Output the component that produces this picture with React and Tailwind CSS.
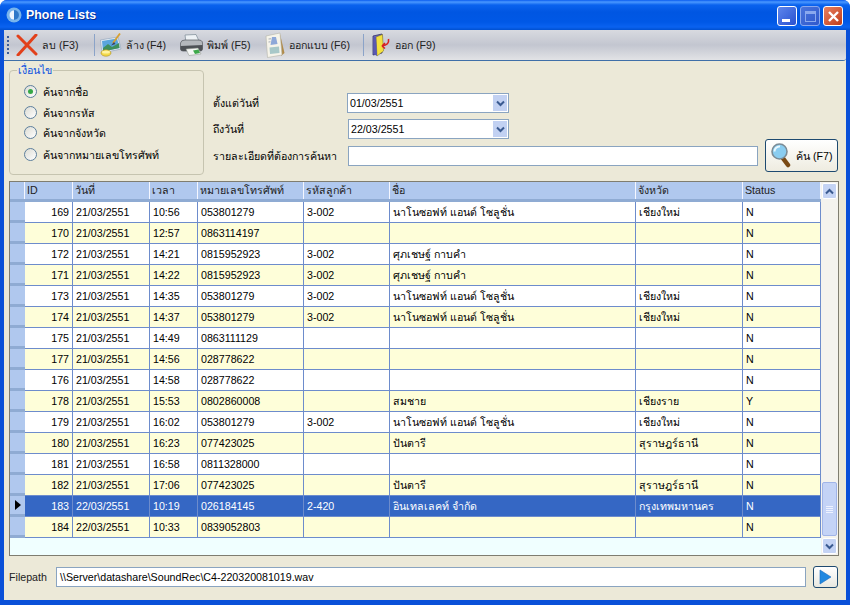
const rows = [
  ["169","21/03/2551","10:56","053801279","3-002","นาโนซอฟท์ แอนด์ โซลูชั่น","เชียงใหม่","N"],
  ["170","21/03/2551","12:57","0863114197","","","","N"],
  ["172","21/03/2551","14:21","0815952923","3-002","ศุภเชษฐ์ กาบคำ","","N"],
  ["171","21/03/2551","14:22","0815952923","3-002","ศุภเชษฐ์ กาบคำ","","N"],
  ["173","21/03/2551","14:35","053801279","3-002","นาโนซอฟท์ แอนด์ โซลูชั่น","เชียงใหม่","N"],
  ["174","21/03/2551","14:37","053801279","3-002","นาโนซอฟท์ แอนด์ โซลูชั่น","เชียงใหม่","N"],
  ["175","21/03/2551","14:49","0863111129","","","","N"],
  ["177","21/03/2551","14:56","028778622","","","","N"],
  ["176","21/03/2551","14:58","028778622","","","","N"],
  ["178","21/03/2551","15:53","0802860008","","สมชาย","เชียงราย","Y"],
  ["179","21/03/2551","16:02","053801279","3-002","นาโนซอฟท์ แอนด์ โซลูชั่น","เชียงใหม่","N"],
  ["180","21/03/2551","16:23","077423025","","ปันตารี","สุราษฎร์ธานี","N"],
  ["181","21/03/2551","16:58","0811328000","","","","N"],
  ["182","21/03/2551","17:06","077423025","","ปันตารี","สุราษฎร์ธานี","N"],
  ["183","22/03/2551","10:19","026184145","2-420","อินเทลเลคท์ จำกัด","กรุงเทพมหานคร","N"],
  ["184","22/03/2551","10:33","0839052803","","","","N"],
];
const headers = ["ID","วันที่","เวลา","หมายเลขโทรศัพท์","รหัสลูกค้า","ชื่อ","จังหวัด","Status"];
const cols = "grid grid-cols-[15px_48px_77px_48px_106px_86px_246px_107px_78px]";

const XIcon = () => (
  <svg width="22" height="22" viewBox="0 0 22 22" className="shrink-0"><path d="M2 2 L20 20 M20 1 L2 21" stroke="#e2401a" strokeWidth="3" strokeLinecap="round" fill="none"/></svg>
);
const PaintIcon = () => (
  <svg width="22" height="24" viewBox="0 0 22 24" className="shrink-0">
    <path d="M0.5 7 L18 4 L21 16 L2 20 Z" fill="#e8eef4" stroke="#8aa0b8" strokeWidth="0.6"/>
    <path d="M2 8 L17 5.5 L19.5 15 L3 18.5 Z" fill="#5aa5dc"/>
    <path d="M3 15 L8 11 L12 14 L19 10 L19.5 15 L3 18.5 Z" fill="#3f8f5c"/>
    <path d="M13 10 L20 0.5" stroke="#d8a030" strokeWidth="1.8"/>
    <path d="M11 12.5 L14 9 L15.5 11 Z" fill="#404060"/>
    <ellipse cx="6" cy="20" rx="5" ry="3.2" fill="#f3d94a" stroke="#b09020" strokeWidth="0.6"/>
    <ellipse cx="6" cy="19" rx="4" ry="1.6" fill="#fff3a0"/>
  </svg>
);
const PrinterIcon = () => (
  <svg width="23" height="22" viewBox="0 0 23 22" className="shrink-0">
    <path d="M5 1 L16 0.5 L19 7 L6 8 Z" fill="#eef2f5" stroke="#7a8894" strokeWidth="0.7"/>
    <path d="M0.5 9 Q1 6 5 6 L18 6 Q22.5 6 22.5 9 L22.5 15 Q22.5 17 20 17 L3 17 Q0.5 17 0.5 15 Z" fill="#b4b8bc" stroke="#55595e" strokeWidth="0.7"/>
    <path d="M0.5 12 L22.5 11 L22.5 15 Q22.5 17 20 17 L3 17 Q0.5 17 0.5 15 Z" fill="#4e5256"/>
    <path d="M6 15 L18 14 L21 20 L9 21.5 Z" fill="#f4f6f4" stroke="#8a9088" strokeWidth="0.5"/>
    <path d="M13 16.5 L18.5 15.5 L20 19 L15 20 Z" fill="#3da84a"/>
  </svg>
);
const FormIcon = () => (
  <svg width="20" height="26" viewBox="0 0 20 26" className="shrink-0">
    <path d="M15 2 L19.5 21 L16 24 Z" fill="#b08a48"/>
    <path d="M1 4 L15 1 L17 23 L2.5 25.5 Z" fill="#f6f4ea" stroke="#b4b4a8" strokeWidth="0.6"/>
    <path d="M7 5 L11 5 L12.5 12 L5.5 13 Z" fill="#8ea8d8"/>
    <path d="M4.5 15.5 L14 14.5 L14.5 21 L5 22 Z" fill="#a8c8c8"/>
    <path d="M3.5 7 L6 6.8 M3.5 10 L5.5 9.8" stroke="#9098a8" strokeWidth="0.8"/>
  </svg>
);
const DoorIcon = () => (
  <svg width="18" height="24" viewBox="0 0 18 24" className="shrink-0">
    <path d="M1 3 L10 1 L10 20 L1 22 Z" fill="#6a68c0" stroke="#34346a" strokeWidth="0.8"/>
    <path d="M4 4 L10.5 1.5 L11.5 18 L5 23 Z" fill="#f4e040" stroke="#7a7020" strokeWidth="0.5"/>
    <path d="M1.5 4 L4 4 L5 23 L1.5 21 Z" fill="#5a58b0"/>
    <path d="M16.5 6 Q17.5 12 10 13 M10 13 L13 10 M10 13 L13 15.5" stroke="#d82020" strokeWidth="1.6" fill="none"/>
  </svg>
);
const Loupe = () => (
  <svg width="20" height="25" viewBox="0 0 20 25" className="shrink-0">
    <path d="M11 14 L17 22" stroke="#7a4a14" strokeWidth="4.5" strokeLinecap="round"/>
    <circle cx="8.5" cy="8.5" r="7.5" fill="#8acdf0" stroke="#7c8c96" strokeWidth="1.6"/>
    <path d="M3.5 8.5 A5 5 0 0 1 9 3.5" stroke="#e8f8ff" strokeWidth="2" fill="none"/>
  </svg>
);
const Chevron = ({ up, color = "#3a5a90" }) => (
  <svg width="9" height="7" viewBox="0 0 9 7">
    <path d={up ? "M1 5.5 L4.5 2 L8 5.5" : "M1 1.5 L4.5 5 L8 1.5"} stroke={color} strokeWidth="2" fill="none"/>
  </svg>
);
const ToolBtn = ({ icon, label, cls }) => (
  <div className={`flex items-center ${cls}`}>
    {icon}
    <span className="text-[#222] whitespace-nowrap">{label}</span>
  </div>
);
const Sep = ({ cls }) => <div className={`w-px h-[22px] bg-[#8ba3c8] ${cls}`} />;
const Radio = ({ checked, label, cls }) => (
  <div className={`flex items-center gap-[6px] h-[13px] ml-[14px] ${cls}`}>
    <div className="w-[13px] h-[13px] rounded-full border border-[#5d7f9d] bg-gradient-to-br from-[#dcdcd4] to-white flex items-center justify-center">
      {checked && <div className="w-[5px] h-[5px] rounded-full bg-[#36a846]" />}
    </div>
    <span className="whitespace-nowrap">{label}</span>
  </div>
);
const DateBox = ({ value, cls }) => (
  <div className={`h-[20px] border border-[#8aa4c0] bg-white flex items-center justify-between pl-[2px] pr-[1px] ${cls}`}>
    <span>{value}</span>
    <div className="w-[14px] h-[16px] bg-[#c2d1f2] flex items-center justify-center"><Chevron /></div>
  </div>
);

export default function App() {
  return (
    <div className="w-[850px] h-[605px] overflow-hidden flex flex-col bg-[#0a50d8] rounded-t-[7px] font-['Liberation_Sans','Noto_Sans',sans-serif] text-[10.67px] text-black">
      {/* title bar */}
      <div className="h-[30px] shrink-0 flex items-center pl-[6px] pr-[7px] [background-image:linear-gradient(180deg,#0a5cf0_0px,#4a98ff_2px,#0a62ee_5px,#0056e2_12px,#0058e6_22px,#0a62f0_27px,#0050d0_30px)]">
        <svg width="16" height="16" viewBox="0 0 16 16">
          <circle cx="8" cy="8" r="7.5" fill="#78b4ec"/>
          <circle cx="8" cy="8" r="4.5" fill="#eef6ff"/>
          <path d="M8 3 A5 5 0 0 1 8 13 Z" fill="#2f78c8"/>
        </svg>
        <span className="ml-[4px] text-white font-bold text-[12.4px] [text-shadow:1px_1px_0_#0a3090]">Phone Lists</span>
        <div className="ml-auto mt-[2px] flex gap-[3px]">
          <div className="w-[20px] h-[20px] rounded-[3px] border border-white bg-gradient-to-br from-[#5f86ec] to-[#2a50d0] flex items-end pl-[4px] pb-[3px]">
            <div className="w-[8px] h-[3px] bg-white" />
          </div>
          <div className="w-[20px] h-[20px] rounded-[3px] border border-[#8aa8ee] bg-gradient-to-br from-[#4a74dc] to-[#2f58cc] flex items-center justify-center">
            <div className="w-[11px] h-[11px] border border-[#8aa8ee] border-t-[3px]" />
          </div>
          <div className="w-[20px] h-[20px] rounded-[3px] border border-white bg-gradient-to-br from-[#e88060] to-[#c03a14] flex items-center justify-center">
            <svg width="13" height="13" viewBox="0 0 13 13"><path d="M2 2 L11 11 M11 2 L2 11" stroke="#fff" strokeWidth="2.4"/></svg>
          </div>
        </div>
      </div>

      {/* client area */}
      <div className="flex-1 mx-[4px] mb-[5px] bg-[#ece9d8] flex flex-col min-h-0">
        {/* toolbar */}
        <div className="h-[31px] shrink-0 flex items-center rounded-br-[3px] border-b border-[#3f6fa8] bg-gradient-to-b from-[#d8dae0] via-[#c3c6d0] to-[#e2e3e6]">
          <div className="ml-[3px] w-[2px] h-[18px] border-l-2 border-dotted border-[#3a5a98]" />
          <ToolBtn cls="ml-[7px] gap-[4px]" icon={<XIcon />} label="ลบ (F3)" />
          <Sep cls="ml-[15px]" />
          <ToolBtn cls="ml-[5px] gap-[4px]" icon={<PaintIcon />} label="ล้าง (F4)" />
          <ToolBtn cls="ml-[14px] gap-[4px]" icon={<PrinterIcon />} label="พิมพ์ (F5)" />
          <ToolBtn cls="ml-[14px] gap-[4px]" icon={<FormIcon />} label="ออกแบบ (F6)" />
          <Sep cls="ml-[13px]" />
          <ToolBtn cls="ml-[8px] gap-[5px]" icon={<DoorIcon />} label="ออก (F9)" />
        </div>

        {/* filter section */}
        <div className="h-[120px] shrink-0 flex items-start pl-[5px] pr-[1px]">
          <fieldset className="w-[195px] h-[111px] mt-[3px] border border-[#c6c4b0] rounded-[4px] shrink-0">
            <legend className="ml-[7px] px-[1px] text-[#0a50e0] leading-[12px]">เงื่อนไข</legend>
            <Radio checked label="ค้นจากชื่อ" cls="mt-[9px]" />
            <Radio label="ค้นจากรหัส" cls="mt-[8px]" />
            <Radio label="ค้นจากจังหวัด" cls="mt-[7px]" />
            <Radio label="ค้นจากหมายเลขโทรศัพท์" cls="mt-[9px]" />
          </fieldset>
          <div className="ml-[9px] w-[545px] pt-[32px] flex flex-col">
            <div className="flex items-center h-[20px]">
              <span className="w-[134px]">ตั้งแต่วันที่</span>
              <DateBox value="01/03/2551" cls="w-[162px]" />
            </div>
            <div className="flex items-center h-[20px] mt-[6px]">
              <span className="w-[135px]">ถึงวันที่</span>
              <DateBox value="22/03/2551" cls="w-[161px]" />
            </div>
            <div className="flex items-center h-[20px] mt-[7px]">
              <span className="w-[135px]">รายละเอียดที่ต้องการค้นหา</span>
              <div className="w-[410px] h-[20px] border border-[#8aa4c0] bg-white" />
            </div>
          </div>
          <div className="ml-[7px] mt-[78px] w-[73px] h-[33px] rounded-[3px] border border-[#1e4a70] bg-gradient-to-b from-white to-[#eeece0] flex items-center pl-[5px] gap-[5px]">
            <Loupe />
            <span className="whitespace-nowrap">ค้น (F7)</span>
          </div>
        </div>

        {/* data grid */}
        <div className="ml-[5px] mr-[7px] h-[375px] shrink-0 border border-[#7f7d70] flex bg-[#f0ffff] min-h-0">
          <div className="w-[811px] flex flex-col">
            <div className={`${cols} h-[20px] shrink-0 bg-[#b0c8ee] border-b-[3px] border-[#8fabd3] text-[#222]`}>
              <div className="border-r border-[#f4f6ff]" />
              {headers.map((h) => (
                <div key={h} className="pl-[2px] border-r border-[#f4f6ff] leading-[17px] whitespace-nowrap overflow-hidden">{h}</div>
              ))}
            </div>
            {rows.map((r) => {
              const sel = r[0] === "183";
              const even = ["170","171","174","177","178","180","182","184"].includes(r[0]);
              const bg = sel ? "bg-[#3567c4] text-white" : even ? "bg-[#fefed9]" : "bg-white";
              return (
                <div key={r[0]} className={`${cols} h-[21px] shrink-0 ${bg}`}>
                  <div className="bg-[#b0c8ee] border-b-[3px] border-[#8fabd3] flex items-center justify-center text-black">
                    {sel && <svg width="6" height="10" viewBox="0 0 6 10"><path d="M0 0 L6 5 L0 10 Z" fill="#000"/></svg>}
                  </div>
                  {r.map((c, i) => (
                    <div key={i} className={`border-r border-b border-[#6d8ccc] leading-[20px] whitespace-nowrap overflow-hidden ${i === 0 ? "text-right pr-[3px]" : "pl-[3px]"}`}>{c}</div>
                  ))}
                </div>
              );
            })}
          </div>
          {/* scrollbar */}
          <div className="w-[17px] flex flex-col bg-[#f4f3ee] px-[1px]">
            <div className="h-[16px] mt-[1px] rounded-[2px] border border-white bg-[#c4d3f4] flex items-center justify-center"><Chevron up /></div>
            <div className="flex-1" />
            <div className="h-[54px] rounded-[2px] border border-[#a0b4e8] bg-[#c4d3f6] flex flex-col items-center justify-center gap-[1px]">
              <div className="w-[7px] h-px bg-[#eef2ff]" />
              <div className="w-[7px] h-px bg-[#eef2ff]" />
              <div className="w-[7px] h-px bg-[#eef2ff]" />
              <div className="w-[7px] h-px bg-[#eef2ff]" />
            </div>
            <div className="h-[16px] mt-[2px] mb-[1px] rounded-[2px] border border-white bg-[#c4d3f4] flex items-center justify-center"><Chevron /></div>
          </div>
        </div>

        {/* filepath */}
        <div className="flex items-center ml-[5px] mr-[8px] mt-[10px] h-[22px]">
          <span className="w-[47px] text-[#222]">Filepath</span>
          <div className="w-[750px] h-[20px] border border-[#8aa4c0] bg-white pl-[3px] leading-[18px] overflow-hidden whitespace-nowrap">\\Server\datashare\SoundRec\C4-220320081019.wav</div>
          <div className="ml-[7px] w-[25px] h-[22px] rounded-[3px] border border-[#1e4a70] bg-gradient-to-b from-white to-[#e8e8e0] flex items-center justify-center">
            <svg width="13" height="16" viewBox="0 0 13 16"><path d="M1 1 L12 8 L1 15 Z" fill="#2088e0" stroke="#1a6cc0" strokeWidth="0.6"/></svg>
          </div>
        </div>
      </div>
    </div>
  );
}
